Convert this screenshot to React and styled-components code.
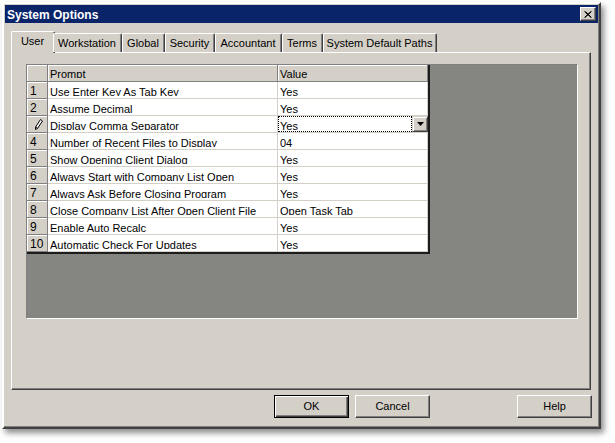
import React from "react";
import styled, { createGlobalStyle } from "styled-components";

const Global = createGlobalStyle`
  html, body { margin: 0; padding: 0; background: #ffffff; }
  * { box-sizing: border-box; }
  body { font-family: "Liberation Sans", Arial, sans-serif; font-size: 11px; color: #000; }
`;

const FACE = "#d4d0c8";

const Page = styled.div`
  padding: 2px 0 0 2px;
  width: 615px;
  height: 443px;
`;

const Window = styled.div`
  width: 599px;
  height: 427px;
  background: ${FACE};
  border: 2px solid;
  border-color: #fff #404040 #404040 #fff;
  box-shadow: inset -1px -1px 0 #808080, 3px 4px 6px rgba(0, 0, 0, 0.45);
  padding: 1px;
  display: flex;
  flex-direction: column;
`;

const TitleBar = styled.div`
  height: 18px;
  background: #0a246a;
  color: #fff;
  font-family: "Liberation Sans", Arial, sans-serif;
  font-weight: bold;
  font-size: 12px;
  display: flex;
  align-items: center;
  justify-content: space-between;
  padding: 0 2px 0 2px;
`;

const Title = styled.span`
  padding-top: 1px;
`;

const CloseBtn = styled.div`
  width: 16px;
  height: 14px;
  background: ${FACE};
  border: 1px solid;
  border-color: #fff #404040 #404040 #fff;
  box-shadow: inset -1px -1px 0 #808080;
  display: flex;
  align-items: center;
  justify-content: center;
`;

const Body = styled.div`
  flex: 1;
  display: flex;
  flex-direction: column;
  padding: 8px 6px 0 6px;
`;

const TabStrip = styled.div`
  display: flex;
  align-items: flex-end;
  height: 21px;
  position: relative;
  z-index: 1;
`;

const Tab = styled.div`
  width: ${(p) => p.$w}px;
  height: ${(p) => (p.$active ? 22 : 19)}px;
  margin: ${(p) => (p.$active ? "0 -2px -1px 0" : "0")};
  background: ${FACE};
  border-top: 1px solid #fff;
  border-left: 1px solid #fff;
  border-right: 1px solid #404040;
  box-shadow: inset -1px 0 0 #808080;
  border-radius: 2px 2px 0 0;
  display: flex;
  justify-content: center;
  padding-top: ${(p) => (p.$active ? 3 : 3)}px;
  padding-right: 1px;
  white-space: nowrap;
`;

const Panel = styled.div`
  width: 580px;
  height: 338px;
  border: 1px solid;
  border-color: #fff #404040 #404040 #fff;
  box-shadow: inset -1px -1px 0 #808080;
  padding: 11px 0 0 14px;
`;

const GridWell = styled.div`
  width: 552px;
  height: 255px;
  background: #858581;
  border: 1px solid;
  border-color: #808080 #fff #fff #808080;
`;

const Grid = styled.div`
  display: grid;
  grid-template-columns: 21px 230px 150px;
  width: 403px;
  background: #fff;
  border-right: 2px solid #1c1c1c;
  border-bottom: 2px solid #1c1c1c;
`;

const HeadCell = styled.div`
  height: 17px;
  background: ${FACE};
  border-right: 1px solid #808080;
  border-bottom: 1px solid #808080;
  box-shadow: inset 1px 1px 0 #fff;
  padding: 3px 0 0 2px;
  overflow: hidden;
  white-space: nowrap;
  line-height: 12px;
`;

const NumCell = styled(HeadCell)`
  display: flex;
  align-items: flex-start;
  justify-content: ${(p) => (p.$icon ? "flex-end" : "flex-start")};
  padding: ${(p) => (p.$icon ? "3px 4px 0 0" : "3px 0 0 3px")};
  font-size: 12px;
`;

const Cell = styled.div`
  height: 17px;
  border-right: 1px solid ${FACE};
  border-bottom: 1px solid ${FACE};
  padding: 0 0 0 2px;
  display: flex;
  align-items: flex-start;
`;

const CellText = styled.span`
  display: block;
  height: ${(p) => p.$clip || 14}px;
  padding-top: ${(p) => (p.$top != null ? p.$top : 4)}px;
  line-height: 12px;
  overflow: hidden;
  white-space: nowrap;
  flex: 1;
`;

const EditCell = styled.div`
  height: 17px;
  border-bottom: 1px solid ${FACE};
  display: flex;
  align-items: stretch;
`;

const FocusBox = styled.div`
  flex: 1;
  border: 1px dotted #000;
  padding-left: 1px;
  display: flex;
  align-items: flex-start;
`;

const DropBtn = styled.div`
  width: 16px;
  height: 16px;
  background: ${FACE};
  border: 1px solid;
  border-color: ${FACE} #404040 #404040 ${FACE};
  box-shadow: inset 1px 1px 0 #fff, inset -1px -1px 0 #808080;
  display: flex;
  align-items: center;
  justify-content: center;
`;

const ButtonRow = styled.div`
  display: flex;
  margin-top: 5px;
  padding-left: 263px;
  gap: 6px;
`;

const Button = styled.div`
  width: 75px;
  height: 23px;
  background: ${FACE};
  border: 1px solid;
  border-color: ${(p) => (p.$default ? "#000" : "#fff #404040 #404040 #fff")};
  box-shadow: ${(p) =>
    p.$default
      ? "inset 1px 1px 0 #fff, inset -1px -1px 0 #404040, inset -2px -2px 0 #808080"
      : "inset -1px -1px 0 #808080"};
  display: flex;
  align-items: center;
  justify-content: center;
  margin-left: ${(p) => p.$push || 0}px;
  padding-bottom: 1px;
`;

const rows = [
  ["Use Enter Key As Tab Key", "Yes"],
  ["Assume Decimal", "Yes"],
  ["Display Comma Separator", "Yes"],
  ["Number of Recent Files to Display", "04"],
  ["Show Opening Client Dialog", "Yes"],
  ["Always Start with Company List Open", "Yes"],
  ["Always Ask Before Closing Program", "Yes"],
  ["Close Company List After Open Client File", "Open Task Tab"],
  ["Enable Auto Recalc", "Yes"],
  ["Automatic Check For Updates", "Yes"],
];

const tabs = [
  ["User", 44],
  ["Workstation", 69],
  ["Global", 43],
  ["Security", 50],
  ["Accountant", 67],
  ["Terms", 41],
  ["System Default Paths", 114],
];

const Pencil = () => (
  <svg width="8" height="11" viewBox="0 0 8 11">
    <path d="M5.5 0.5 L7.5 2 L2.5 9.5 L0.5 10.5 L0.6 8 Z" fill="#fff" stroke="#000" strokeWidth="1" />
    <path d="M1.2 8.2 L2.6 9.2" stroke="#000" strokeWidth="1" />
  </svg>
);

export default function App() {
  return (
    <Page>
      <Global />
      <Window>
        <TitleBar>
          <Title>System Options</Title>
          <CloseBtn>
            <svg width="8" height="7" viewBox="0 0 8 7">
              <path d="M0.5 0.5 L7 6.5 M1.5 0.5 L7.5 6.5 M7 0.5 L0.5 6.5 M7.5 0.5 L1 6.5" stroke="#000" strokeWidth="1" />
            </svg>
          </CloseBtn>
        </TitleBar>
        <Body>
          <TabStrip>
            {tabs.map(([t, w], i) => (
              <Tab key={t} $w={w} $active={i === 0}>
                {t}
              </Tab>
            ))}
          </TabStrip>
          <Panel>
            <GridWell>
              <Grid>
                <HeadCell />
                <HeadCell>
                  <CellText $top={0} $clip={10}>Prompt</CellText>
                </HeadCell>
                <HeadCell>
                  <CellText $top={0} $clip={10}>Value</CellText>
                </HeadCell>
                {rows.map(([p, v], i) => (
                  <React.Fragment key={p}>
                    <NumCell $icon={i === 2}>{i === 2 ? <Pencil /> : i + 1}</NumCell>
                    <Cell>
                      <CellText>{p}</CellText>
                    </Cell>
                    {i === 2 ? (
                      <EditCell>
                        <FocusBox>
                          <CellText $top={3} $clip={13}>{v}</CellText>
                        </FocusBox>
                        <DropBtn>
                          <svg width="7" height="4" viewBox="0 0 7 4">
                            <path d="M0 0 H7 L3.5 4 Z" fill="#000" />
                          </svg>
                        </DropBtn>
                      </EditCell>
                    ) : (
                      <Cell>
                        <CellText>{v}</CellText>
                      </Cell>
                    )}
                  </React.Fragment>
                ))}
              </Grid>
            </GridWell>
          </Panel>
          <ButtonRow>
            <Button $default>OK</Button>
            <Button>Cancel</Button>
            <Button $push={81}>Help</Button>
          </ButtonRow>
        </Body>
      </Window>
    </Page>
  );
}
